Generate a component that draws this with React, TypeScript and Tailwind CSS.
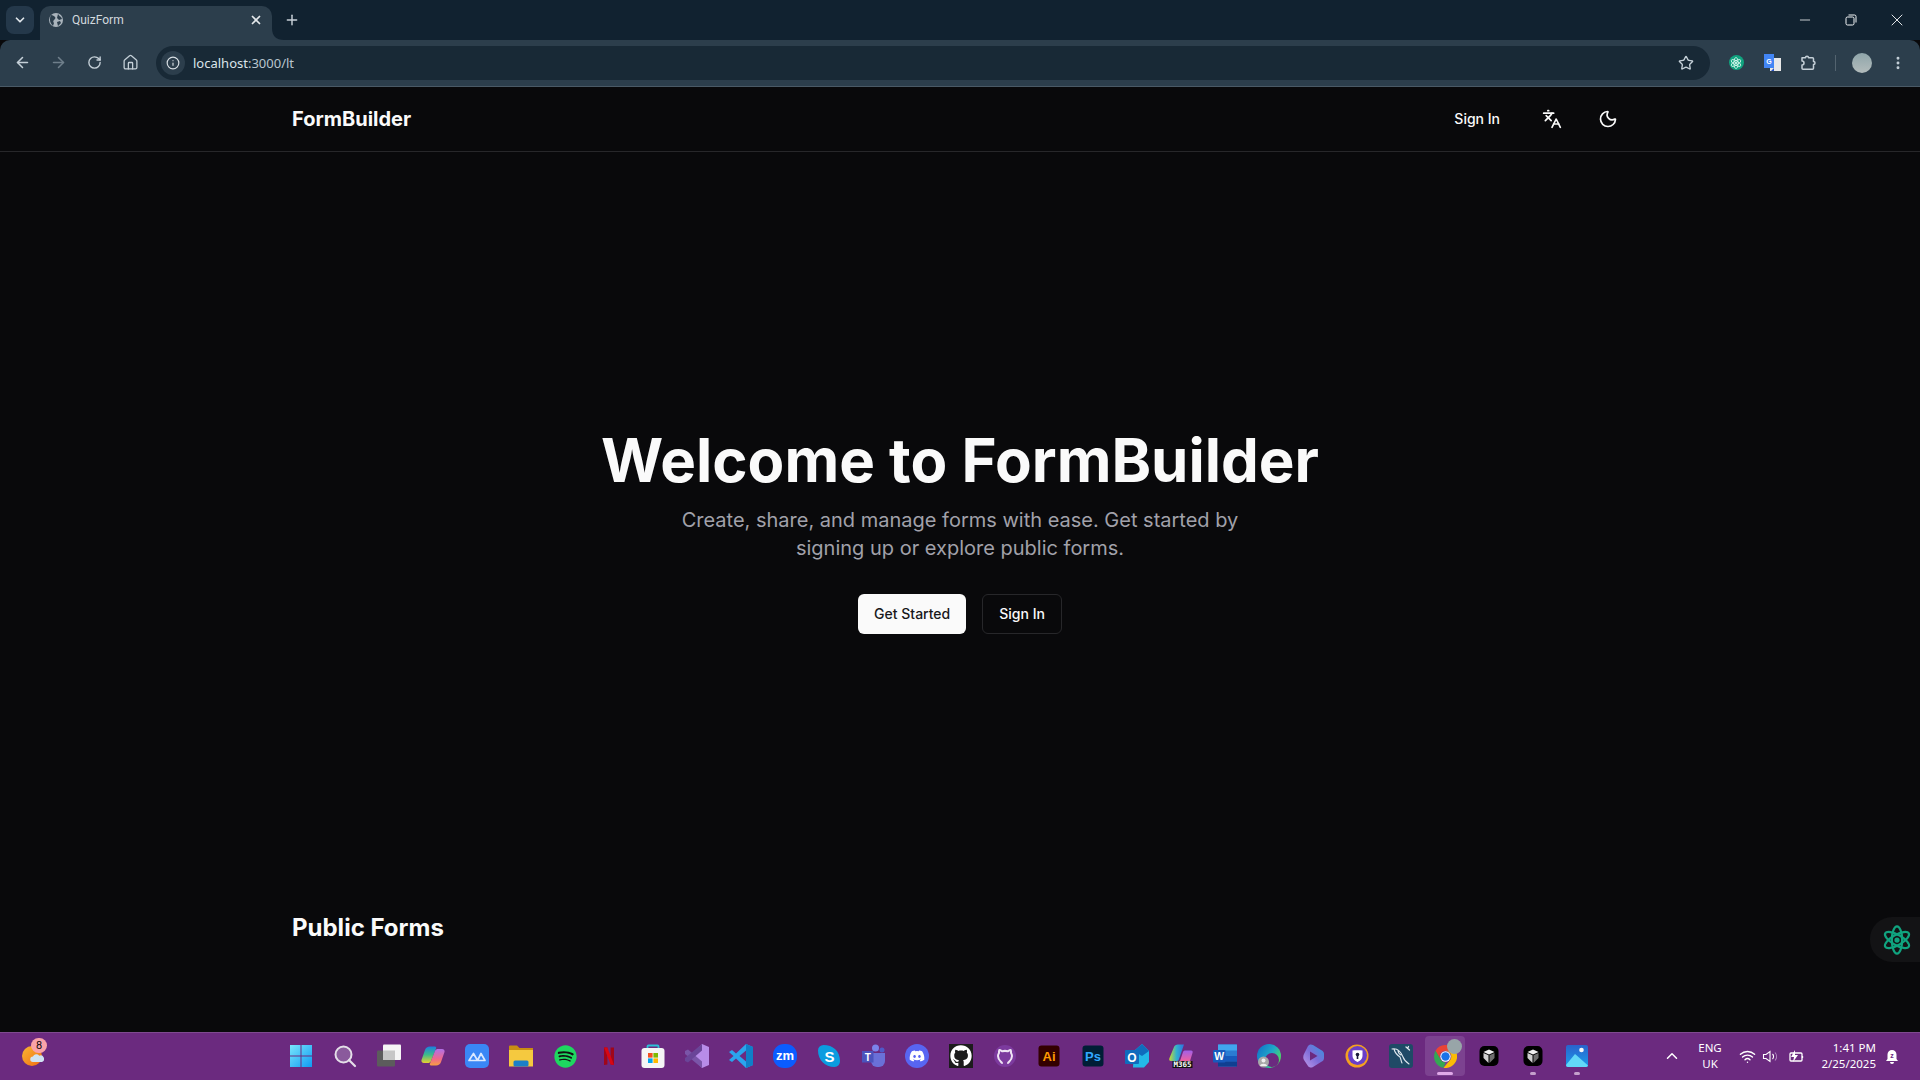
import { ArrowLeft, ArrowRight, ChevronDown, ChevronUp, Home, Info, Languages, Moon, Plus, RotateCw, Star, Wifi, X, Minus, EllipsisVertical } from "lucide-react";
import { FaDiscord, FaGithub, FaSpotify } from "react-icons/fa";
import type { ReactNode } from "react";

// orbit logo used by the chat widget and the extension button
const Swirl = ({ size, color, sw }: { size: number; color: string; sw: number }) => (
  <svg width={size} height={size} viewBox="0 0 32 32" fill="none" stroke={color} strokeWidth={sw}>
    <ellipse cx="16" cy="16" rx="14.5" ry="5.5" transform="rotate(30 16 16)" />
    <ellipse cx="16" cy="16" rx="14.5" ry="5.5" transform="rotate(150 16 16)" />
    <ellipse cx="16" cy="16" rx="14.5" ry="5.5" transform="rotate(270 16 16)" />
    <circle cx="16" cy="16" r="2.8" fill={color} stroke="none" />
  </svg>
);

const Svg = ({ children }: { children: ReactNode }) => (
  <svg width="24" height="24" viewBox="0 0 24 24" fill="none">{children}</svg>
);

const label = { fontFamily: "Liberation Sans, sans-serif", fontWeight: 700 };
const TASKBAR = "#6b2a7f";

const taskbarIcons: ReactNode[] = [
  // windows
  <Svg key="win">
    <defs>
      <linearGradient id="winG" x1="0" y1="0" x2="1" y2="1">
        <stop offset="0" stopColor="#7ae6fd" />
        <stop offset="1" stopColor="#0f9af2" />
      </linearGradient>
    </defs>
    <path d="M1 1h10.5v10.500H1zM12.500 1H23v10.500H12.500zM1 12.500h10.500V23H1zM12.500 12.500H23V23H12.500z" fill="url(#winG)" />
  </Svg>,
  // search
  <Svg key="search">
    <circle cx="10.500" cy="10.500" r="8" fill="#8a5a9c" stroke="#e4dfe8" strokeWidth="2" />
    <path d="M16 16l6 6" stroke="#e4dfe8" strokeWidth="2.200" strokeLinecap="round" />
  </Svg>,
  // task view
  <Svg key="task">
    <rect x="0" y="6.500" width="18" height="16" rx="1" fill="#5c5c5c" />
    <rect x="6" y="0.500" width="18" height="15.500" rx="1" fill="#f5f5f5" />
    <rect x="6" y="6.500" width="12" height="9.500" fill="#c6c6c6" />
  </Svg>,
  // copilot
  <Svg key="copilot">
    <defs>
      <linearGradient id="copA" x1="0" y1="0" x2="0" y2="1">
        <stop offset="0" stopColor="#1c7fe0" />
        <stop offset="0.5" stopColor="#3dbb8a" />
        <stop offset="1" stopColor="#e8d030" />
      </linearGradient>
      <linearGradient id="copB" x1="0" y1="0" x2="0" y2="1">
        <stop offset="0" stopColor="#b070e8" />
        <stop offset="0.6" stopColor="#f0688c" />
        <stop offset="1" stopColor="#f8a040" />
      </linearGradient>
    </defs>
    <path d="M9 2.500h5c1 0 1.500 1 1 2L10 17c-.5 1.500-2 2-3 2H3c-2 0-3-1.500-2.500-3L4 6c.7-2 2.500-3.500 5-3.500z" fill="url(#copA)" />
    <path d="M15 21.500h-5c-1 0-1.500-1-1-2L14 7c.5-1.500 2-2 3-2h4c2 0 3 1.500 2.500 3L20 18c-.7 2-2.500 3.500-5 3.500z" fill="url(#copB)" />
  </Svg>,
  // blue app tile
  <Svg key="tile">
    <rect width="24" height="24" rx="5" fill="#3a87f6" />
    <path d="M4 16.500L8.500 9.500l4 7zM12.500 16.500l3.500-7 4 7z" stroke="#dbe9ff" strokeWidth="1.700" strokeLinejoin="round" />
  </Svg>,
  // files
  <Svg key="files">
    <path d="M0 5h24v17.500H0z" fill="#f5c93f" />
    <path d="M0 2.500a1 1 0 011-1h7l2.500 2.500H24v2H0z" fill="#c98d12" />
    <rect x="4.500" y="16.500" width="15" height="6" rx="1.500" fill="#1c80c8" />
  </Svg>,
  // spotify
  <div key="spotify" className="relative flex h-6 w-6 items-center justify-center">
    <div className="absolute h-5 w-5 rounded-full bg-[#121212]" />
    <FaSpotify size={23} color="#1ed760" className="relative" />
  </div>,
  // netflix
  <Svg key="netflix">
    <path d="M7 3.500h3.400V20.500L7 21zM13.600 3.500H17V21l-3.400-.5z" fill="#a0061a" />
    <path d="M7 3.500h3.400L17 21l-3.400-.5z" fill="#d90613" />
  </Svg>,
  // store
  <Svg key="store">
    <path d="M6.500 5V2.500a1 1 0 011-1h9a1 1 0 011 1V5" stroke="#2cc0d8" strokeWidth="1.800" />
    <rect x="0.500" y="4" width="23" height="20" rx="3" fill="#f5f5f5" />
    <rect x="7" y="9" width="4.600" height="4.600" fill="#f25022" />
    <rect x="12.400" y="9" width="4.600" height="4.600" fill="#7fba00" />
    <rect x="7" y="14.400" width="4.600" height="4.600" fill="#00a4ef" />
    <rect x="12.400" y="14.400" width="4.600" height="4.600" fill="#ffb900" />
  </Svg>,
  // visual studio
  <Svg key="vs">
    <path d="M17 0l7 3v18l-7 3L6 12z" fill="#b88ce8" />
    <path d="M0 7l3-1.500 14 12V24L0 10z" fill="#7a55a8" />
    <path d="M0 17l3 1.500 14-12V0L0 14z" fill="#6a4598" />
  </Svg>,
  // vs code
  <Svg key="vscode">
    <path d="M17 0l7 3v18l-7 3L7 14.500 3 18l-3-2 4.500-4L0 8l3-2 4 3.500z" fill="#2aa5ee" />
    <path d="M17 0l7 3v18l-7 3z" fill="#0f7fc8" />
    <path d="M17 6.500L10.500 12l6.500 5.500z" fill={TASKBAR} />
  </Svg>,
  // zoom
  <Svg key="zoom">
    <rect width="24" height="24" rx="11" fill="#0b5cff" />
    <text x="12" y="16" textAnchor="middle" fontSize="13" fill="#fff" style={label}>zm</text>
  </Svg>,
  // skype
  <Svg key="skype">
    <path d="M1 6.500A5.500 5.500 0 016.500 1C16 1 23 7 23 17a5.500 5.500 0 01-5.500 6C8 23 1 16 1 6.500z" fill="#0b9ce0" />
    <text x="12.500" y="18" textAnchor="middle" fontSize="15" fill="#fff" style={label}>S</text>
  </Svg>,
  // teams
  <Svg key="teams">
    <circle cx="14.500" cy="4" r="3.500" fill="#7b83eb" />
    <circle cx="21" cy="6" r="2.500" fill="#5059c9" />
    <path d="M10 9h14v8a6 6 0 01-6 6h-2a6 6 0 01-6-6z" fill="#6a70d8" />
    <rect x="1" y="7" width="11.500" height="11.500" fill="#4b53bc" />
    <text x="6.700" y="16.500" textAnchor="middle" fontSize="10" fill="#fff" style={label}>T</text>
  </Svg>,
  // discord
  <div key="discord" className="flex h-6 w-6 items-center justify-center rounded-full bg-[#5865f2]">
    <FaDiscord size={16} color="#fff" />
  </div>,
  // github
  <div key="github" className="flex h-6 w-6 items-center justify-center bg-[#1c1c1c]">
    <FaGithub size={22} color="#fff" />
  </div>,
  // github desktop
  <Svg key="ghd">
    <circle cx="12" cy="12" r="11" fill="#7c3a9e" />
    <path d="M9 19c-1-1.500-4-3-4-7 0-1 .3-2 1-3-.2-1 0-2 .3-3 1 0 2 .7 3 1.300a9 9 0 015.400 0c1-.6 2-1.300 3-1.300.3 1 .5 2 .3 3 .7 1 1 2 1 3 0 4-3 5.500-4 7" stroke="#efe4f4" strokeWidth="2" strokeLinecap="round" strokeLinejoin="round" />
  </Svg>,
  // illustrator
  <Svg key="ai">
    <rect x="1.500" y="1.500" width="21" height="21" rx="3" fill="#330000" />
    <text x="12" y="17" textAnchor="middle" fontSize="13" fill="#ff9a00" style={label}>Ai</text>
  </Svg>,
  // photoshop
  <Svg key="ps">
    <rect x="1.500" y="1.500" width="21" height="21" rx="3" fill="#001e36" />
    <text x="12" y="17" textAnchor="middle" fontSize="13" fill="#31a8ff" style={label}>Ps</text>
  </Svg>,
  // outlook
  <Svg key="outlook">
    <path d="M9 7l8-7 7 7v11l-5 5.500H8z" fill="#22b8e8" />
    <path d="M17 0l7 7-7 5-8-5z" fill="#0f6cbd" />
    <rect x="0" y="6" width="14" height="14" rx="1" fill="#0f6cbd" />
    <text x="7" y="17.500" textAnchor="middle" fontSize="12" fill="#fff" style={label}>O</text>
  </Svg>,
  // m365
  <Svg key="m365">
    <defs>
      <linearGradient id="mA" x1="0" y1="0" x2="1" y2="0">
        <stop offset="0" stopColor="#c8d830" />
        <stop offset="0.5" stopColor="#30b0d0" />
        <stop offset="1" stopColor="#3070e0" />
      </linearGradient>
      <linearGradient id="mB" x1="0" y1="0" x2="0" y2="1">
        <stop offset="0" stopColor="#a060e8" />
        <stop offset="1" stopColor="#f060a0" />
      </linearGradient>
    </defs>
    <path d="M2 17c-2 0-2-2-1.500-3L5 3c.5-1.500 2-2.500 4-2.500h6L10 15c-.5 1.500-1 2-3 2z" fill="url(#mA)" />
    <path d="M11 17l3-9c.5-1 1-1.500 2.500-1.500H22c1.500 0 2 1 1.500 2.500L21 17z" fill="url(#mB)" />
    <rect x="3.500" y="17" width="20" height="7" fill="#111" />
    <text x="13.500" y="23" textAnchor="middle" fontSize="7.500" fill="#fff" style={{ fontFamily: "DejaVu Sans Mono, monospace", fontWeight: 700 }}>M365</text>
  </Svg>,
  // word
  <Svg key="word">
    <rect x="5" y="0.500" width="19" height="22" rx="1" fill="#2b7cd3" />
    <rect x="5" y="0.500" width="19" height="6" fill="#41a5ee" />
    <rect x="5" y="12" width="19" height="5.500" fill="#185abd" />
    <rect x="5" y="17.500" width="19" height="5" fill="#103f91" />
    <rect x="0" y="6" width="12.500" height="12.500" rx="1" fill="#185abd" />
    <text x="6.200" y="16" textAnchor="middle" fontSize="10.500" fill="#fff" style={label}>W</text>
  </Svg>,
  // edge
  <Svg key="edge">
    <defs>
      <linearGradient id="edgeG" x1="0" y1="0" x2="1" y2="0.600">
        <stop offset="0" stopColor="#0f6cc8" />
        <stop offset="0.600" stopColor="#1fa8c8" />
        <stop offset="1" stopColor="#50d860" />
      </linearGradient>
    </defs>
    <circle cx="12" cy="12" r="12" fill="url(#edgeG)" />
    <circle cx="15" cy="16" r="7" fill={TASKBAR} />
    <circle cx="6.500" cy="18" r="5.500" fill="#a8a8a8" />
    <circle cx="6.500" cy="16.500" r="2" fill="#eeeeee" />
    <path d="M3 22c0-3 7-3 7 0z" fill="#eeeeee" />
  </Svg>,
  // clipchamp style hexagon
  <Svg key="hex">
    <defs>
      <linearGradient id="hexG" x1="1" y1="0" x2="0" y2="1">
        <stop offset="0" stopColor="#2f9ae0" />
        <stop offset="0.500" stopColor="#7d6cd8" />
        <stop offset="1" stopColor="#c09ae8" />
      </linearGradient>
    </defs>
    <path d="M7 2c1-1.500 3-2 5-1l8 5c2 1 3 2 3 4v4c0 2-1 3-3 4l-8 5c-2 1-4 .5-5-1l-4-6c-1-1.500-1-4 0-6z" fill="url(#hexG)" />
    <path d="M9 7.500l7.500 4.500L9 16.500z" fill={TASKBAR} />
  </Svg>,
  // vpn shield
  <Svg key="vpn">
    <circle cx="12" cy="12" r="11.500" fill="#f4a020" />
    <circle cx="12.500" cy="11.500" r="9.500" fill="#6a3fc8" />
    <path d="M7.500 6.500c3-.5 7-.5 10 0V12c0 3-2.500 5-5 6-2.500-1-5-3-5-6z" fill="#fff" />
    <circle cx="12.500" cy="10.500" r="1.800" fill="#1a1a3a" />
    <rect x="11.700" y="11" width="1.600" height="4" fill="#1a1a3a" />
  </Svg>,
  // mysql dolphin
  <Svg key="mysql">
    <rect width="24" height="24" rx="3" fill="#1f4a66" />
    <path d="M3 5c5-1 9 3 11 8 1 3 3 5 6 7M5 5c1 4 3 6 6 8 1 2 1 4 2 6M9 6c0 2 1 4 3 5" stroke="#dfe8ee" strokeWidth="1.100" strokeLinecap="round" />
    <path d="M17 3l3.500 3M19.500 2.500l-1 2" stroke="#dfe8ee" strokeWidth="1.300" strokeLinecap="round" />
  </Svg>,
];

const Cube = () => (
  <Svg>
    <rect x="2.500" y="2" width="19" height="20" rx="5" fill="#000" />
    <path d="M12 5.500l5.500 2.500-5.500 2.500L6.500 8z" fill="#f0f0f0" />
    <path d="M6.500 9l5 2.300V19l-5-5z" fill="#d0d0d0" />
    <path d="M12.500 11.300l5-2.300v5l-5 5z" fill="#6f6f6f" />
  </Svg>
);

const Chrome = () => (
  <svg width="23" height="23" viewBox="0 0 24 24" fill="none">
    <path d="M1.600 6A12 12 0 0122.400 6H12a6 6 0 00-5.200 9z" fill="#ea4335" />
    <path d="M1.600 6l5.200 9a6 6 0 005.200 3l-2 5.800A12 12 0 011.600 6z" fill="#34a853" />
    <path d="M22.400 6A12 12 0 0110 23.800L17.200 15A6 6 0 0012 6z" fill="#fbbc05" />
    <circle cx="12" cy="12" r="5.400" fill="#fff" />
    <circle cx="12" cy="12" r="4.400" fill="#1a73e8" />
  </svg>
);

export default function App() {
  return (
    <div className="flex h-screen w-full flex-col overflow-hidden bg-[#09090b] font-['Inter',sans-serif]">
      {/* Tab strip */}
      <div className="flex h-10 shrink-0 items-end bg-[#112230] font-['Noto_Sans',sans-serif]">
        <div className="mb-[6px] ml-[6px] flex h-7 w-7 items-center justify-center rounded-lg bg-[#24384a] text-[#dfe5ea]">
          <ChevronDown size={14} strokeWidth={3} />
        </div>
        <div className="relative ml-[6px] flex h-[34px] w-[232px] items-center rounded-t-[10px] bg-[#2c3e4c] pb-[6px] pl-[8px] pr-[9px]">
          <svg width="16" height="16" viewBox="0 0 16 16" className="shrink-0">
            <circle cx="8" cy="8" r="7" fill="#aab4bc" />
            <path d="M3 3c2 0 3 1 4 2s0 2-1 3-1 2 0 3l-1 3c-2-2-3-4-3-6s0-3 1-5zM10 2c1 1 1 2 3 3l1 2-3 1-2-2zM9 10l3-1 1 2-3 3z" fill="#2c3e4c" />
          </svg>
          <span className="ml-[8px] flex-1 font-['Roboto',sans-serif] text-[12px] text-[#d3d9de]">QuizForm</span>
          <X size={14} strokeWidth={3} className="text-[#e4e8eb]" />
          <svg width="12" height="12" viewBox="0 0 12 12" className="absolute bottom-0 right-[-12px]">
            <path d="M0 0c0 8 4 12 12 12H0z" fill="#2c3e4c" />
          </svg>
        </div>
        <div className="mb-[12px] ml-[12px] text-[#c7d0d7]">
          <Plus size={16} strokeWidth={2.2} />
        </div>
        <div className="flex-1" />
        <div className="mb-[10px] flex items-center text-[#f4f6f7]">
          <div className="flex w-[46px] justify-center"><Minus size={16} strokeWidth={1.2} /></div>
          <div className="flex w-[46px] justify-center">
            <svg width="12" height="12" viewBox="0 0 12 12" fill="none" stroke="currentColor">
              <rect x="1" y="3" width="8" height="8" rx="1.500" />
              <path d="M3.500 1h6a1.500 1.500 0 011.500 1.500v6" />
            </svg>
          </div>
          <div className="flex w-[46px] justify-center"><X size={20} strokeWidth={1.1} /></div>
        </div>
      </div>

      {/* Toolbar */}
      <div className="flex h-[47px] shrink-0 items-center rounded-t-[10px] border-b border-[#4a5a66] bg-[#2c3e4c] px-1 pb-[1px] font-['Noto_Sans',sans-serif]">
        <div className="flex h-9 w-9 items-center justify-center text-[#c5d0d8]"><ArrowLeft size={17} strokeWidth={2.2} /></div>
        <div className="flex h-9 w-9 items-center justify-center text-[#6f7f8b]"><ArrowRight size={17} strokeWidth={2.2} /></div>
        <div className="flex h-9 w-9 items-center justify-center text-[#c5d0d8]"><RotateCw size={15} strokeWidth={2.2} /></div>
        <div className="flex h-9 w-9 items-center justify-center text-[#c5d0d8]"><Home size={17} strokeWidth={1.8} /></div>
        <div className="ml-2 flex h-[34px] flex-1 items-center rounded-full bg-[#182936] pl-[5px] pr-[16px]">
          <div className="flex h-6 w-6 items-center justify-center rounded-full bg-[#2c3e4c] text-[#d8dfe4]"><Info size={14} strokeWidth={2} /></div>
          <span className="ml-[8px] flex-1 pt-[2px] text-[13px] text-[#dbe4ea]">localhost<span className="text-[#b9c5ce]">:3000/lt</span></span>
          <Star size={16} strokeWidth={2} className="text-[#c5d0d8]" />
        </div>
        <div className="ml-2 flex h-9 w-9 items-center justify-center">
          <div className="flex h-[15px] w-[15px] items-center justify-center rounded-full bg-[#10a37f]">
            <Swirl size={12} color="#e8fff8" sw={2} />
          </div>
        </div>
        <div className="flex h-9 w-9 items-center justify-center">
          <svg width="17" height="17" viewBox="0 0 17 17">
            <rect x="6" y="4" width="11" height="13" fill="#e8e8e8" />
            <path d="M0 0h10v14H0z" fill="#4285f4" />
            <path d="M10 14l-3 3h3z" fill="#2a56c6" />
            <text x="5" y="10" textAnchor="middle" fontSize="7" fill="#fff" style={label}>G</text>
          </svg>
        </div>
        <div className="flex h-9 w-9 items-center justify-center">
          <svg width="16" height="16" viewBox="0 0 16 16" fill="none" stroke="#c5d0d8" strokeWidth="1.500" strokeLinejoin="round">
            <path d="M2 2.800h3.500a1.500 1.500 0 013 0H12.500a1 1 0 011 1V6.500a1.500 1.500 0 010 3v3.700a1 1 0 01-1 1H3a1 1 0 01-1-1V10a2 2 0 000-4z" />
          </svg>
        </div>
        <div className="flex w-[18px] justify-center"><div className="h-4 w-px bg-[#53636f]" /></div>
        <div className="flex h-9 w-9 items-center justify-center">
          <div className="h-5 w-5 rounded-full bg-gradient-to-b from-[#8fa5aa] to-[#b3bcbc]" />
        </div>
        <div className="flex h-9 w-9 items-center justify-center text-[#c5d0d8]"><EllipsisVertical size={16} strokeWidth={2.4} /></div>
      </div>

      {/* Page */}
      <div className="relative min-h-0 flex-1 text-[#fafafa]">
        <header className="border-b border-[#27272a]">
          <div className="mx-auto flex h-16 max-w-[1400px] items-center justify-between px-8">
            <span className="text-xl font-bold">FormBuilder</span>
            <div className="flex items-center gap-4">
              <button className="flex h-10 items-center px-4 text-sm font-medium">Sign In</button>
              <button className="flex h-10 w-10 items-center justify-center"><Languages size={20} strokeWidth={2} /></button>
              <button className="flex h-10 w-10 items-center justify-center"><Moon size={20} strokeWidth={2} /></button>
            </div>
          </div>
        </header>
        <main className="mx-auto max-w-[1400px] px-8">
          <section className="flex flex-col items-center pb-[278px] pt-[278px] text-center">
            <h1 className="text-6xl font-bold">Welcome to FormBuilder</h1>
            <p className="mt-4 max-w-[600px] text-xl text-[#a1a1aa]">
              Create, share, and manage forms with ease. Get started by signing up or explore public forms.
            </p>
            <div className="mt-8 flex gap-4">
              <button className="flex h-10 items-center rounded-md bg-[#fafafa] px-4 text-sm font-medium text-[#18181b]">Get Started</button>
              <button className="flex h-10 items-center rounded-md border border-[#27272a] px-4 text-sm font-medium">Sign In</button>
            </div>
          </section>
          <h2 className="text-2xl font-bold">Public Forms</h2>
        </main>
        <div className="absolute right-0 top-[830px] flex h-[45px] w-[50px] items-center rounded-l-[22px] bg-[#131315] pl-[12px]">
          <Swirl size={30} color="#10a37f" sw={2.4} />
        </div>
      </div>

      {/* Taskbar */}
      <div className="flex h-12 shrink-0 items-center border-t border-[#7f4a90] bg-[#6b2a7f] pb-[1px]">
        <div className="relative ml-[22px] flex h-6 w-[24px] shrink-0">
          <div className="mt-[2px] h-5 w-5 rounded-full bg-gradient-to-br from-[#f7b733] to-[#f06a10]" />
          <svg width="14" height="9" viewBox="0 0 15 10" className="absolute left-[8px] top-[9px]">
            <path d="M3 10a3 3 0 010-6 4 4 0 017-1 3.500 3.500 0 013 7z" fill="#cfe3f2" />
          </svg>
          <div className="absolute left-[9px] top-[-6px] flex h-[15px] w-[16px] items-center justify-center rounded-full bg-[#f9a3a8] text-[10px] text-black">8</div>
        </div>
        <div className="ml-[233px] flex shrink-0 items-center">
          {taskbarIcons.map((icon, i) => (
            <div key={i} className="flex h-10 w-11 items-center justify-center">{icon}</div>
          ))}
          <div className="relative mx-[2px] flex h-10 w-10 items-center justify-center rounded bg-[#7c4290]">
            <Chrome />
            <div className="absolute left-[22px] top-[3px] h-[15px] w-[15px] rounded-full bg-[#98a5a8]" />
            <div className="absolute bottom-[1px] h-[3px] w-4 rounded-full bg-[#e0a8e8]" />
          </div>
          <div className="relative flex h-10 w-11 items-center justify-center">
            <Cube />
          </div>
          <div className="relative flex h-10 w-11 items-center justify-center">
            <Cube />
            <div className="absolute bottom-[1px] h-[3px] w-[6px] rounded-full bg-[#c4a0cc]" />
          </div>
          <div className="relative flex h-10 w-11 items-center justify-center">
            <svg width="22" height="22" viewBox="0 0 22 22">
              <defs>
                <linearGradient id="photoG" x1="0" y1="0" x2="0" y2="1">
                  <stop offset="0" stopColor="#2a62cc" />
                  <stop offset="1" stopColor="#1a9cea" />
                </linearGradient>
              </defs>
              <rect width="22" height="22" rx="2" fill="url(#photoG)" />
              <path d="M0 20l9-11 4 3.500 9 8V20a2 2 0 01-2 2H2a2 2 0 01-2-2z" fill="#62d8f8" />
              <circle cx="15.500" cy="5" r="2.300" fill="#f7f7f7" />
            </svg>
            <div className="absolute bottom-[1px] h-[3px] w-[6px] rounded-full bg-[#c4a0cc]" />
          </div>
        </div>
        <div className="ml-[64px] flex flex-1 items-center text-white font-['Noto_Sans',sans-serif]">
          <ChevronUp size={18} strokeWidth={2} />
          <div className="ml-[12px] w-[34px] text-center text-[11.500px] leading-[16px]">ENG<br />UK</div>
          <Wifi size={17} strokeWidth={2} className="ml-[12px]" />
          <svg width="17" height="17" viewBox="0 0 17 17" fill="none" stroke="#fff" strokeWidth="1.100" className="ml-[6px]">
            <path d="M1.500 6.500h2.500L8 3.500v10l-4-3H1.500z" />
            <path d="M10.500 6a3.500 3.500 0 010 5" />
            <path d="M13 4.500a6 6 0 010 8" stroke="#b58ac4" />
          </svg>
          <svg width="18" height="14" viewBox="0 0 18 14" fill="none" stroke="#fff" strokeWidth="1.300" className="ml-[8px]">
            <rect x="3" y="4" width="12" height="8" rx="1" />
            <path d="M15.500 7v2" />
            <path d="M8 1L4 8h3l-1 5 5-7H8z" fill="#fff" stroke="none" />
          </svg>
          <div className="ml-[9px] w-[62px] text-right text-[11.500px] leading-[16px]">1:41 PM<br />2/25/2025</div>
          <svg width="14" height="18" viewBox="0 0 14 18" className="ml-[9px]" fill="#fff">
            <path d="M7 3a4.500 4.500 0 00-4.500 4.500V12L1 14h12l-1.500-2V7.500A4.500 4.500 0 007 3zM5 15a2 2 0 004 0z" />
            <text x="7" y="11" textAnchor="middle" fontSize="7" fill="#6b2a7f" style={label}>z</text>
          </svg>
        </div>
      </div>
    </div>
  );
}
